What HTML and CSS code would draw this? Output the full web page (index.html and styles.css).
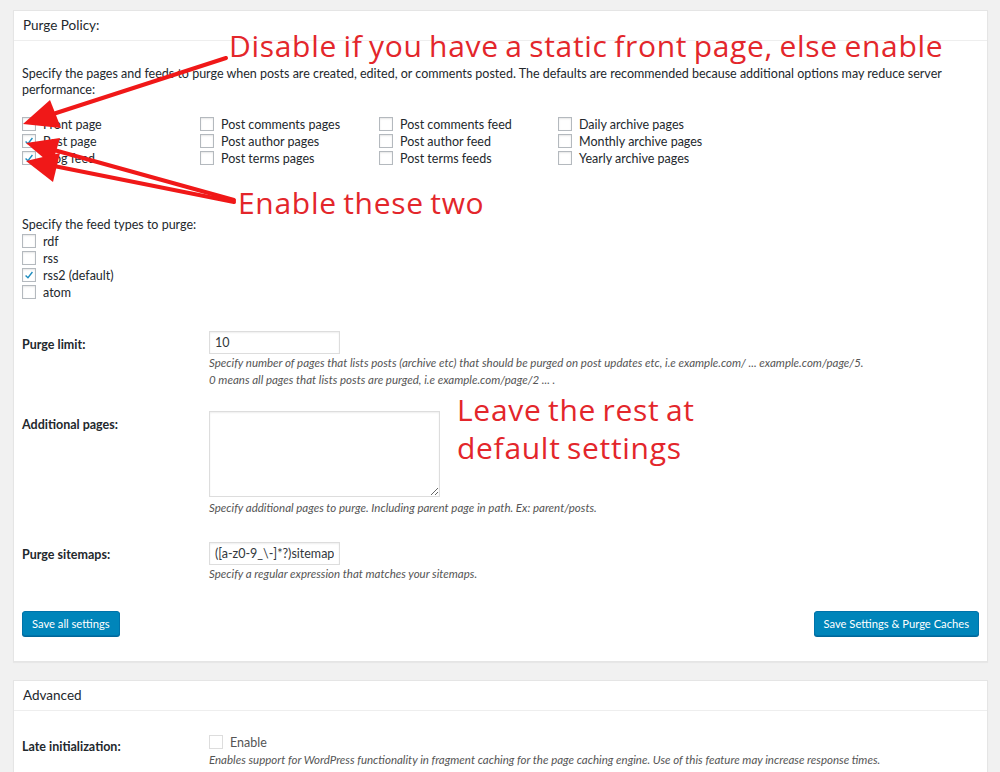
FILE: index.html
```html
<!DOCTYPE html>
<html lang="en">
<head>
    <meta charset="UTF-8">
    <title>Page Cache Settings</title>
    <link rel="stylesheet" href="styles.css">
</head>
<body>
    <div class="wrap">
        <!-- Purge policy box -->
        <div class="postbox">
            <h3 class="hndle">Purge Policy:</h3>
            <div class="inside">
                <p class="intro">Specify the pages and feeds to purge when posts are created, edited, or comments posted. The defaults are recommended because additional options may reduce server performance:</p>

                <ul class="purge-grid">
                    <li><span class="cb"></span>Front page</li>
                    <li><span class="cb checked"><svg viewBox="0 0 14 14"><path d="M3 7.5 L5.8 10.2 L11 3.5"/></svg></span>Post page</li>
                    <li><span class="cb checked"><svg viewBox="0 0 14 14"><path d="M3 7.5 L5.8 10.2 L11 3.5"/></svg></span>Blog feed</li>
                    <li><span class="cb"></span>Post comments pages</li>
                    <li><span class="cb"></span>Post author pages</li>
                    <li><span class="cb"></span>Post terms pages</li>
                    <li><span class="cb"></span>Post comments feed</li>
                    <li><span class="cb"></span>Post author feed</li>
                    <li><span class="cb"></span>Post terms feeds</li>
                    <li><span class="cb"></span>Daily archive pages</li>
                    <li><span class="cb"></span>Monthly archive pages</li>
                    <li><span class="cb"></span>Yearly archive pages</li>
                </ul>

                <p class="feed-title">Specify the feed types to purge:</p>
                <ul class="feed-list">
                    <li><span class="cb"></span>rdf</li>
                    <li><span class="cb"></span>rss</li>
                    <li><span class="cb checked"><svg viewBox="0 0 14 14"><path d="M3 7.5 L5.8 10.2 L11 3.5"/></svg></span>rss2 (default)</li>
                    <li><span class="cb"></span>atom</li>
                </ul>

                <div class="field field-limit">
                    <div class="field-label">Purge limit:</div>
                    <div class="field-control">
                        <input type="text" class="small-input" value="10">
                        <p class="help">Specify number of pages that lists posts (archive etc) that should be purged on post updates etc, i.e example.com/ ... example.com/page/5.</p>
                        <p class="help">0 means all pages that lists posts are purged, i.e example.com/page/2 ... .</p>
                    </div>
                </div>

                <div class="field field-pages">
                    <div class="field-label">Additional pages:</div>
                    <div class="field-control">
                        <textarea class="pages-area"></textarea>
                        <p class="help">Specify additional pages to purge. Including parent page in path. Ex: parent/posts.</p>
                    </div>
                </div>

                <div class="field field-sitemaps">
                    <div class="field-label">Purge sitemaps:</div>
                    <div class="field-control">
                        <input type="text" class="small-input" value="([a-z0-9_\-]*?)sitemap(|">
                        <p class="help">Specify a regular expression that matches your sitemaps.</p>
                    </div>
                </div>

                <div class="actions">
                    <button class="btn-primary">Save all settings</button>
                    <button class="btn-primary">Save Settings &amp; Purge Caches</button>
                </div>
            </div>
        </div>

        <!-- Advanced box -->
        <div class="postbox">
            <h3 class="hndle">Advanced</h3>
            <div class="inside">
                <div class="field field-late">
                    <div class="field-label">Late initialization:</div>
                    <div class="field-control">
                        <label class="enable"><span class="cb disabled"></span>Enable</label>
                        <p class="help">Enables support for WordPress functionality in fragment caching for the page caching engine. Use of this feature may increase response times.</p>
                    </div>
                </div>
            </div>
        </div>
    </div>

    <!-- Red annotations drawn on top of the screenshot -->
    <svg class="arrows" width="1000" height="772" viewBox="0 0 1000 772">
        <g stroke="#f01818" stroke-width="4" stroke-linecap="round" fill="none">
            <line x1="226" y1="58" x2="50" y2="115"/>
            <line x1="234" y1="200" x2="54" y2="150"/>
            <line x1="234" y1="202" x2="54" y2="166"/>
        </g>
        <g fill="#f01818">
            <polygon points="23,124 61,128 50,100"/>
            <polygon points="26,143 60,138 52,165"/>
            <polygon points="26,161 60,153 53,182"/>
        </g>
    </svg>
    <div class="note note-disable">Disable if you have a static front page, else enable</div>
    <div class="note note-enable">Enable these two</div>
    <div class="note note-leave">Leave the rest at<br>default settings</div>
</body>
</html>
```

FILE: styles.css
```css
/* Basic Reset */
* {
    margin: 0;
    padding: 0;
    box-sizing: border-box;
}

body {
    font-family: Lato, "Open Sans", sans-serif;
    font-size: 12.5px;
    color: #23282d;
    background-color: #f1f1f1;
    position: relative;
    overflow: hidden;
    height: 772px;
}

.wrap {
    padding: 10px 12px 0 13px;
}

/* Boxes */
.postbox {
    background: #fff;
    border: 1px solid #e5e5e5;
    box-shadow: 0 1px 1px rgba(0, 0, 0, 0.04);
    margin-bottom: 18px;
}

.hndle {
    font-size: 13.5px;
    font-weight: 400;
    height: 30px;
    line-height: 29px;
    padding: 0 9px;
    border-bottom: 1px solid #eee;
}

.inside {
    padding: 0 8px 25px 8px;
}

.intro {
    margin-top: 25px;
    line-height: 16px;
}

ul {
    list-style: none;
}

/* Checkboxes */
.cb {
    display: inline-block;
    width: 14px;
    height: 14px;
    border: 1px solid #b4b9be;
    background: #fff;
    box-shadow: inset 0 1px 2px rgba(0, 0, 0, 0.1);
    margin-right: 7px;
    vertical-align: -2px;
    position: relative;
}

.cb svg {
    position: absolute;
    left: 0;
    top: 0;
    width: 12px;
    height: 12px;
}

.cb path {
    fill: none;
    stroke: #1e8cbe;
    stroke-width: 1.6;
}

.cb.disabled {
    border-color: #ddd;
    box-shadow: none;
}

.purge-grid {
    margin-top: 18px;
    display: grid;
    grid-template-columns: 178px 179px 179px 179px;
    grid-template-rows: repeat(3, 17px);
    grid-auto-flow: column;
}

.purge-grid li,
.feed-list li {
    line-height: 17px;
    height: 17px;
    white-space: nowrap;
}

.feed-title {
    margin-top: 49px;
    line-height: 17px;
}

/* Fields */
.field {
    display: grid;
    grid-template-columns: 187px 1fr;
}

.field-label {
    font-weight: 700;
    line-height: 17px;
    padding-top: 5px;
}

.field-limit {
    margin-top: 30px;
}

.field-pages {
    margin-top: 23px;
}

.field-sitemaps {
    margin-top: 26px;
}

.field-sitemaps .field-label {
    padding-top: 4px;
}

.small-input {
    display: block;
    width: 131px;
    height: 23px;
    border: 1px solid #ddd;
    box-shadow: inset 0 1px 2px rgba(0, 0, 0, 0.07);
    font-family: Lato, sans-serif;
    font-size: 12.5px;
    color: #32373c;
    padding: 0 5px;
    outline: none;
}

.pages-area {
    display: block;
    width: 231px;
    height: 86px;
    border: 1px solid #ddd;
    box-shadow: inset 0 1px 2px rgba(0, 0, 0, 0.07);
}

.help {
    font-style: italic;
    font-size: 11.5px;
    color: #555;
    line-height: 17px;
}

.field-pages .help {
    margin-top: 2px;
}

/* Buttons */
.actions {
    margin-top: 29px;
    display: flex;
    justify-content: space-between;
}

.btn-primary {
    height: 25px;
    padding: 0 9px;
    background: #0085ba;
    border: 1px solid #0073aa;
    border-radius: 3px;
    box-shadow: 0 1px 0 #006799;
    color: #fff;
    font-family: Lato, sans-serif;
    font-size: 11.2px;
}

.field-late {
    margin-top: 23px;
}

.enable {
    display: block;
    line-height: 17px;
    color: #555;
}

.field-late .field-label {
    padding-top: 4px;
}

/* Annotations */
.arrows {
    position: absolute;
    top: 0;
    left: 0;
    pointer-events: none;
}

.note {
    position: absolute;
    font-family: "Open Sans", sans-serif;
    font-size: 30px;
    letter-spacing: 0.7px;
    word-spacing: -2px;
    color: #e3262b;
    line-height: 38px;
    white-space: nowrap;
}

.note-disable {
    left: 229px;
    top: 27px;
}

.note-enable {
    left: 238px;
    top: 184px;
}

.note-leave {
    left: 457px;
    top: 391px;
}
```
